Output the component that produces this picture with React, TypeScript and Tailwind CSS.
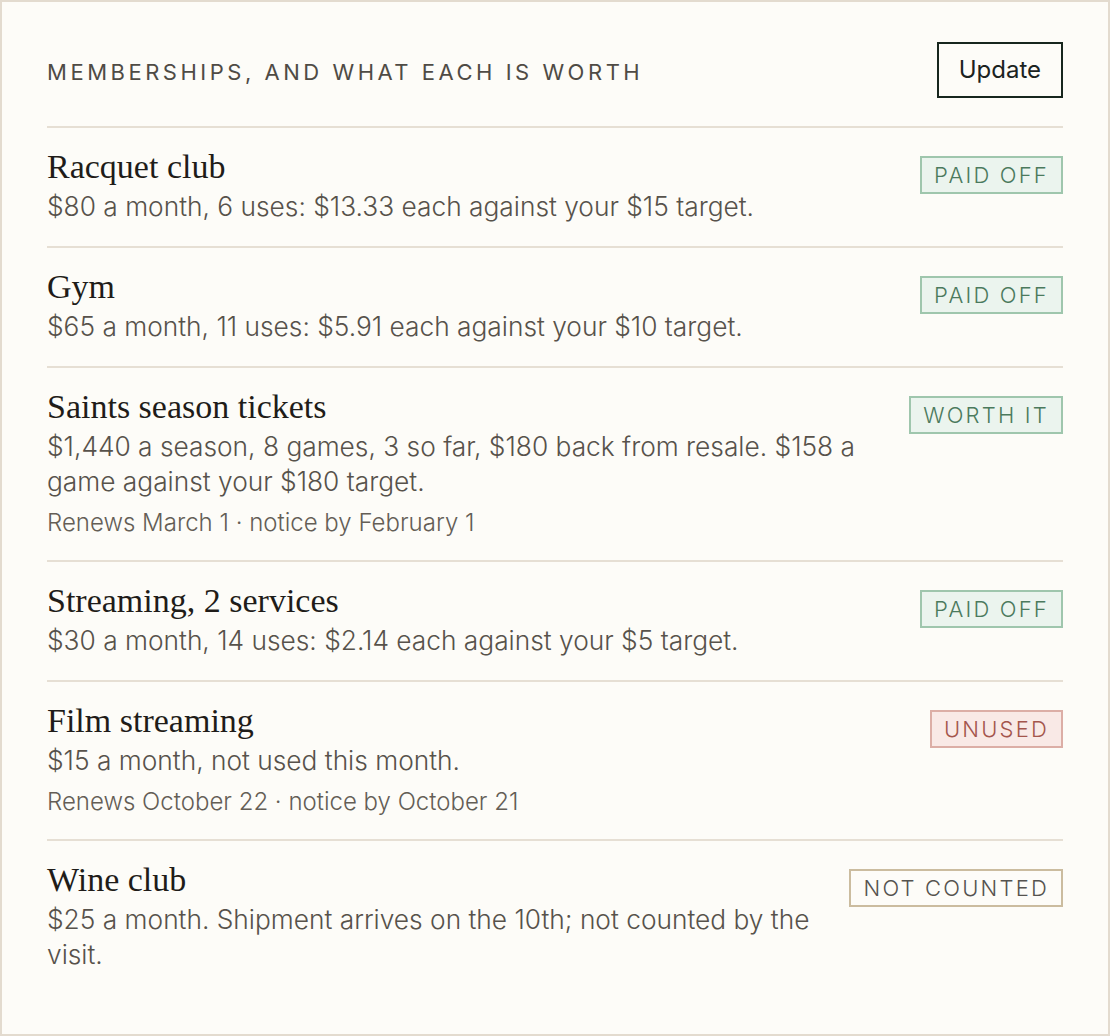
import React from 'react';

type Status = 'paid' | 'worth' | 'unused' | 'uncounted';

interface Membership {
  name: string;
  detail: string;
  notice?: string;
  status: Status;
}

const memberships: Membership[] = [
  {
    name: 'Racquet club',
    detail: '$80 a month, 6 uses: $13.33 each against your $15 target.',
    status: 'paid',
  },
  {
    name: 'Gym',
    detail: '$65 a month, 11 uses: $5.91 each against your $10 target.',
    status: 'paid',
  },
  {
    name: 'Saints season tickets',
    detail:
      '$1,440 a season, 8 games, 3 so far, $180 back from resale. $158 a game against your $180 target.',
    notice: 'Renews March 1 · notice by February 1',
    status: 'worth',
  },
  {
    name: 'Streaming, 2 services',
    detail: '$30 a month, 14 uses: $2.14 each against your $5 target.',
    status: 'paid',
  },
  {
    name: 'Film streaming',
    detail: '$15 a month, not used this month.',
    notice: 'Renews October 22 · notice by October 21',
    status: 'unused',
  },
  {
    name: 'Wine club',
    detail: '$25 a month. Shipment arrives on the 10th; not counted by the visit.',
    status: 'uncounted',
  },
];

const badgeStyles: Record<Status, { label: string; className: string }> = {
  paid: {
    label: 'PAID OFF',
    className: 'border-[#9fc6ad] bg-[#ebf4ee] text-[#4b7a5d]',
  },
  worth: {
    label: 'WORTH IT',
    className: 'border-[#9fc6ad] bg-[#ebf4ee] text-[#4b7a5d]',
  },
  unused: {
    label: 'UNUSED',
    className: 'border-[#dcaea6] bg-[#f9e9e6] text-[#a4554c]',
  },
  uncounted: {
    label: 'NOT COUNTED',
    className: 'border-[#cbbc9f] bg-transparent text-[#55534f]',
  },
};

const StatusBadge: React.FC<{ status: Status }> = ({ status }) => {
  const badge = badgeStyles[status];
  return (
    <span
      className={`mt-[6px] shrink-0 border-2 px-[12px] h-[38px] flex items-center text-[22px] leading-none tracking-[0.1em] font-light ${badge.className}`}
    >
      {badge.label}
    </span>
  );
};

const App: React.FC = () => {
  return (
    <div
      className="min-h-screen bg-[#fdfcf8] border-2 border-[#e3dbcf] px-[45px] pt-[40px] pb-[38px]"
      style={{ fontFamily: 'Inter, "Noto Sans", sans-serif' }}
    >
      <div className="flex items-center justify-between pb-[28px]">
        <h2 className="mt-[5px] text-[22px] tracking-[0.16em] text-[#4f4b45] uppercase">
          Memberships, and what each is worth
        </h2>
        <button className="h-[56px] px-[20px] border-2 border-[#17261e] text-[24px] text-[#1b231f]">
          Update
        </button>
      </div>

      <div>
        {memberships.map((m) => (
          <div
            key={m.name}
            className="flex items-start justify-between gap-8 border-t-2 border-[#e6dfd4] pt-[22px] pb-[22px]"
          >
            <div className="flex-1 min-w-0">
              <h3
                className="text-[34px] leading-[34px] text-[#1f1c19]"
                style={{ fontFamily: '"Liberation Serif", serif' }}
              >
                {m.name}
              </h3>
              <p className="mt-[5px] text-[26.3px] leading-[35px] font-light text-[#57524b]">
                {m.detail}
              </p>
              {m.notice && (
                <p className="mt-[8px] text-[24px] leading-[31px] font-light text-[#645e56]">
                  {m.notice}
                </p>
              )}
            </div>
            <StatusBadge status={m.status} />
          </div>
        ))}
      </div>
    </div>
  );
};

export default App;
